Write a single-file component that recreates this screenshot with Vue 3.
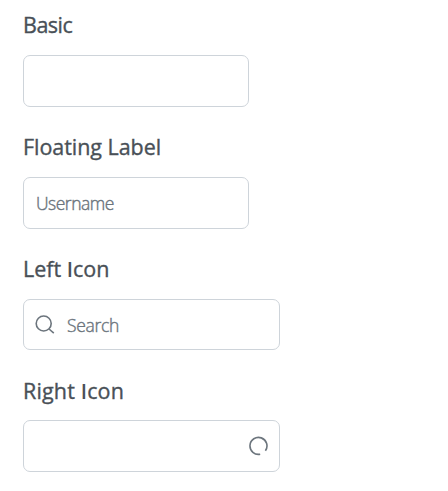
<script setup>
const fields = [
  { words: ['Basic'], key: 'basic' },
  { words: ['Floating Label'], key: 'floating', label: 'Username' },
  { words: ['Left ', 'I', 'con'], key: 'left', label: 'Search' },
  { words: ['Right ', 'I', 'con'], key: 'right' },
]
</script>

<template>
  <main class="page">
    <section v-for="f in fields" :key="f.key" class="field" :class="f.key">
      <h5><span v-for="w in f.words" :key="w" :class="{ plain: w === 'I' }">{{ w }}</span></h5>
      <div class="input">
        <svg v-if="f.key === 'left'" class="search" viewBox="0 0 20 20">
          <circle cx="8.7" cy="8.5" r="7.5" />
          <path d="M14 14L18.8 18.2" />
        </svg>
        <span v-if="f.label" class="label">{{ f.label }}</span>
        <svg v-if="f.key === 'right'" class="spinner" viewBox="0 0 20 20">
          <path d="M12.2 18.2A8.5 8.5 0 1 1 17.4 14.8" />
        </svg>
      </div>
    </section>
  </main>
</template>

<style>
body {
  background: #fff;
}
</style>

<style scoped>
.page {
  display: grid;
  grid-template-rows: 122px 122px 121px 122px;
  padding: 4px 0 0 23px;
  font-family: "Open Sans", "Noto Sans", sans-serif;
}
h5 {
  margin: 0 0 17px;
  height: 34px;
  line-height: 42px;
  font-size: 21.5px;
  font-weight: 500;
  letter-spacing: -0.05px;
  color: #495057;
  -webkit-text-stroke: 0.35px #495057;
  white-space: pre;
}
.plain {
  font-family: Lato, sans-serif;
  font-size: 22px;
  line-height: 1;
  -webkit-text-stroke: 0;
}
.basic h5 {
  letter-spacing: -0.5px;
}
.left h5 {
  letter-spacing: 0;
}
.right h5 {
  line-height: 44px;
  letter-spacing: 0.15px;
}
.input {
  box-sizing: border-box;
  display: flex;
  align-items: center;
  width: 226px;
  height: 52px;
  padding: 0 11px 0 12px;
  border: 1px solid #ced4da;
  border-radius: 7px;
  color: #6c757d;
}
.left .input,
.right .input {
  width: 257px;
}
.left .input {
  height: 51px;
  padding-left: 11px;
}
.label {
  font-size: 17.5px;
  font-weight: 300;
  letter-spacing: -0.5px;
  -webkit-text-stroke: 0.4px #6c757d;
}
.floating .label {
  padding-bottom: 1px;
}
.left .label {
  padding-top: 1px;
  letter-spacing: -0.3px;
}
.search,
.spinner {
  width: 20px;
  height: 20px;
  fill: none;
  stroke: #6c757d;
  stroke-width: 1.6;
}
.search {
  margin: 0 12px 0 0;
}
.spinner {
  margin-left: auto;
}
</style>
